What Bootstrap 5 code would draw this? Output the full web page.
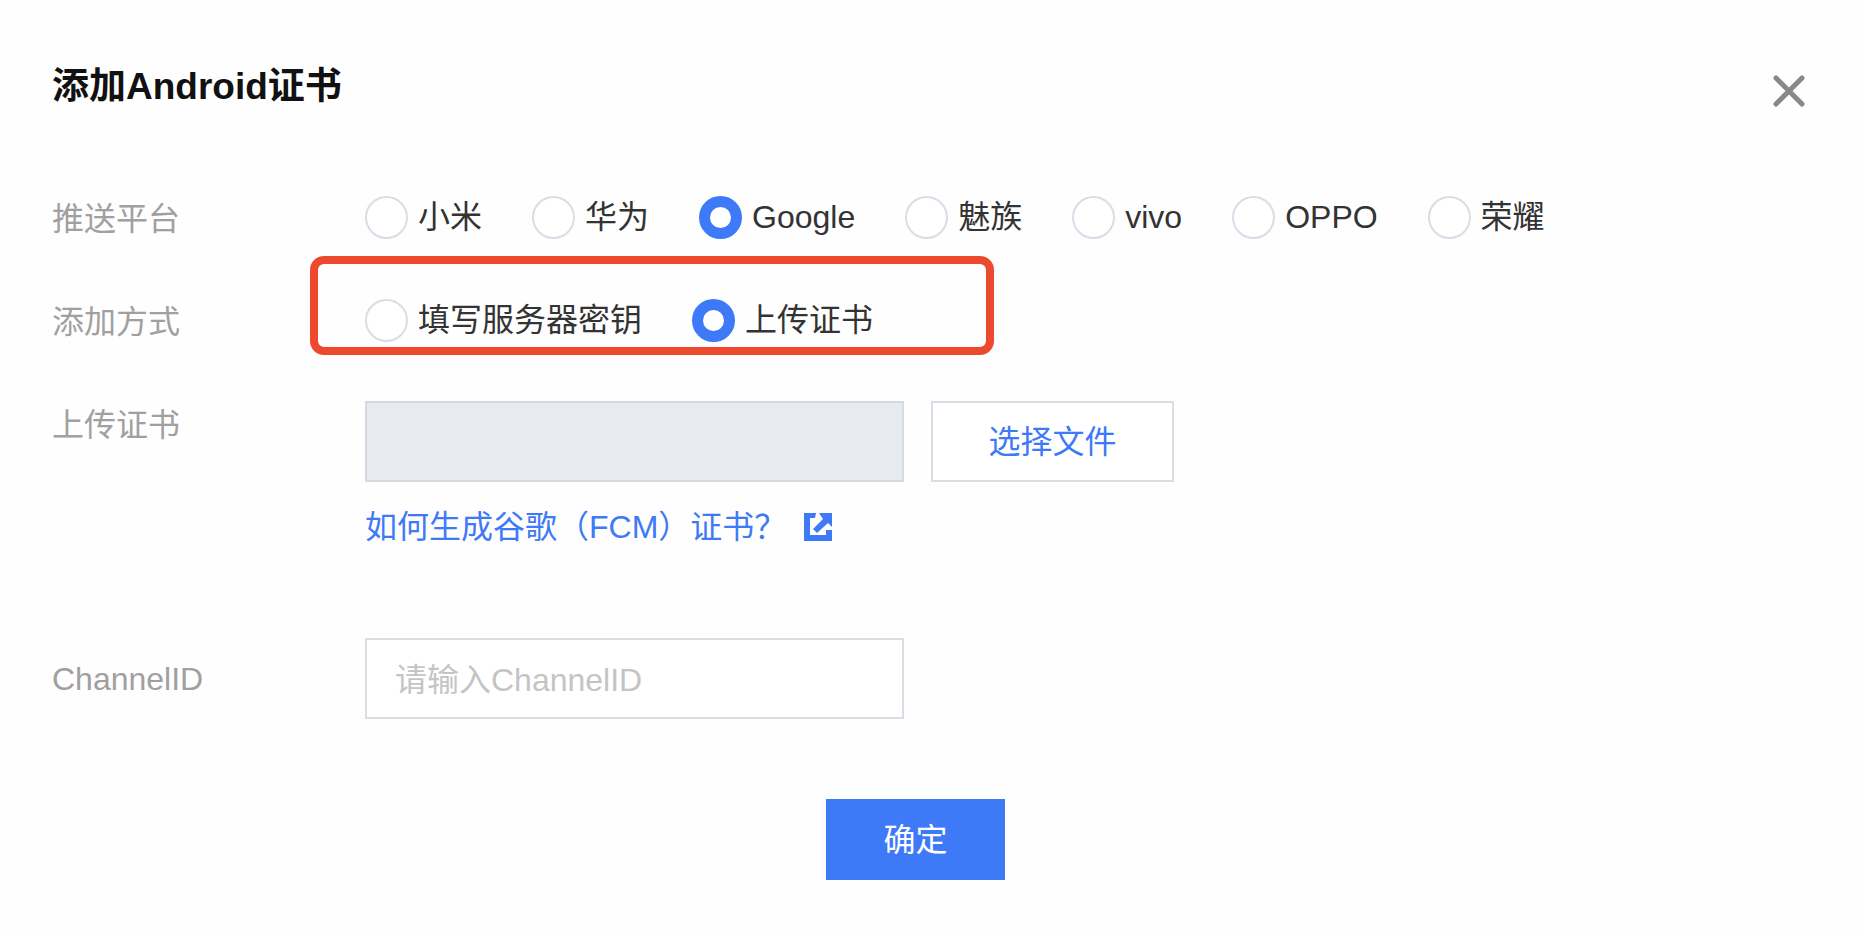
<!DOCTYPE html>
<html lang="zh-CN">
<head>
<meta charset="utf-8">
<meta name="viewport" content="width=device-width, initial-scale=1">
<title>添加Android证书</title>
<link rel="stylesheet" href="https://cdn.jsdelivr.net/npm/bootstrap@5.3.0/dist/css/bootstrap.min.css">
<style>
  :root { --brand: #3e79f7; --line: #d9dde6; }
  body {
    background: #fefefe; color: #333;
    font-family: "Liberation Sans", "Noto Sans CJK SC", sans-serif;
    font-size: 32px; line-height: 48px;
  }
  .cert-dialog { padding: 61px 52px 52px; }
  .cert-head { min-height: 60px; margin-bottom: 72px; }
  .cert-title { font-size: 37px; line-height: 52px; font-weight: 700; color: #111; }
  .close-btn { color: #888; padding: 0 7px 0 0; line-height: 0; border: 0; background: none; }
  .field-row { margin-bottom: 51px; }
  .field-row + .file-row { margin-top: 53px; }
  .field-name { flex: 0 0 313px; color: #a0a0a0; line-height: 52px; font-size: 32px; }
  .file-row .field-name { line-height: 48px; }
  .choices { column-gap: 50px; line-height: 48px; }
  .choice { gap: 10px; cursor: pointer; }
  .choice .form-check-input {
    width: 43px; height: 43px; margin: 0; flex: none;
    border: 2px solid var(--line); background-color: #fff; box-shadow: none;
  }
  .choice .form-check-input:checked {
    border: 11px solid var(--brand); background: #fff;
  }
  .mark-frame {
    left: -55px; top: -40px; width: 684px; height: 99px;
    border: 8px solid #ec492f; border-radius: 14px; pointer-events: none;
  }
  .box-input {
    width: 539px; height: 81px; border: 2px solid var(--line); border-radius: 0;
    padding: 0 28px; font-size: 32px; line-height: 48px; background: #fff;
  }
  .box-input:disabled { background: #e7eaef; border-color: #d5dae0; }
  .box-input::placeholder { color: #c4c4c4; opacity: 1; }
  .pick-btn, .ok-btn { height: 81px; border-radius: 0; font-size: 32px; line-height: 48px; padding: 0; }
  .pick-btn { width: 243px; border: 2px solid var(--line); color: var(--brand); background: #fff; }
  .ok-btn { width: 179px; border: 0; background: var(--brand); color: #fff; }
  .file-tools { gap: 27px; margin-bottom: 21px; }
  .help-link { color: var(--brand); gap: 18px; }
  .channel-row { margin: 87px 0 80px; }
  .channel-row .box-input { padding-top: 4px; }
  .cert-foot { padding-right: 33px; }
</style>
</head>
<body>
<main class="cert-dialog">
  <header class="cert-head d-flex justify-content-between">
    <h1 class="cert-title mb-0">添加Android证书</h1>
    <button type="button" class="close-btn align-self-center" aria-label="关闭">
      <svg width="32" height="32" viewBox="0 0 32 32" fill="none" stroke="currentColor" stroke-width="5" stroke-linecap="round"><path d="M3 3 29 29M29 3 3 29"/></svg>
    </button>
  </header>

  <form>
    <div class="field-row d-flex" role="radiogroup" aria-labelledby="n-platform">
      <div class="field-name" id="n-platform">推送平台</div>
      <div class="choices d-flex flex-wrap align-self-start">
        <label class="choice d-flex align-items-center"><input class="form-check-input" type="radio" name="platform">小米</label>
        <label class="choice d-flex align-items-center"><input class="form-check-input" type="radio" name="platform">华为</label>
        <label class="choice d-flex align-items-center"><input class="form-check-input" type="radio" name="platform" checked>Google</label>
        <label class="choice d-flex align-items-center"><input class="form-check-input" type="radio" name="platform">魅族</label>
        <label class="choice d-flex align-items-center"><input class="form-check-input" type="radio" name="platform">vivo</label>
        <label class="choice d-flex align-items-center"><input class="form-check-input" type="radio" name="platform">OPPO</label>
        <label class="choice d-flex align-items-center"><input class="form-check-input" type="radio" name="platform">荣耀</label>
      </div>
    </div>

    <div class="field-row d-flex" role="radiogroup" aria-labelledby="n-method">
      <div class="field-name" id="n-method">添加方式</div>
      <div class="choices d-flex flex-wrap align-self-start position-relative">
        <label class="choice d-flex align-items-center"><input class="form-check-input" type="radio" name="method">填写服务器密钥</label>
        <label class="choice d-flex align-items-center"><input class="form-check-input" type="radio" name="method" checked>上传证书</label>
        <div class="mark-frame position-absolute"></div>
      </div>
    </div>

    <div class="file-row d-flex">
      <label class="field-name" for="cert-file">上传证书</label>
      <div>
        <div class="file-tools d-flex flex-wrap">
          <input class="box-input" id="cert-file" type="text" disabled>
          <button type="button" class="pick-btn btn">选择文件</button>
        </div>
        <a class="help-link d-inline-flex align-items-center text-decoration-none" href="#">如何生成谷歌（FCM）证书？<svg width="28" height="28" viewBox="0 0 28 28" fill="currentColor" aria-hidden="true"><path d="M0 0H12L11 5H6V22H22V17H28V28H0ZM15 0H28V14L24 10 13 20 9 16 19 6Z"/></svg></a>
      </div>
    </div>

    <div class="channel-row d-flex align-items-center">
      <label class="field-name" for="channel">ChannelID</label>
      <input class="box-input" id="channel" type="text" placeholder="请输入ChannelID">
    </div>

    <div class="cert-foot d-flex justify-content-center">
      <button type="submit" class="ok-btn btn">确定</button>
    </div>
  </form>
</main>
<script src="https://cdn.jsdelivr.net/npm/bootstrap@5.3.0/dist/js/bootstrap.bundle.min.js"></script>
</body>
</html>
